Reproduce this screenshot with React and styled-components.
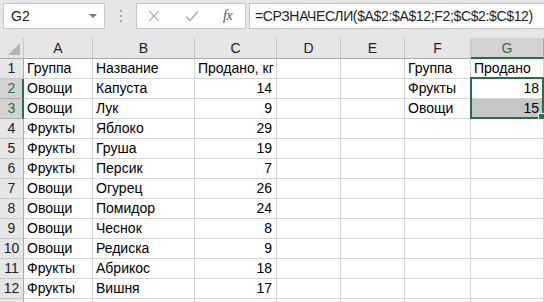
import React from "react";
import styled, { createGlobalStyle } from "styled-components";

const GlobalStyle = createGlobalStyle`
  html, body { margin: 0; padding: 0; background: #ffffff; }
  body { font-family: "Liberation Sans", Arial, sans-serif; overflow: hidden; }
  * { box-sizing: border-box; }
`;

const Page = styled.div`
  width: 544px;
  height: 302px;
  overflow: hidden;
  background: #fff;
`;

const Toolbar = styled.div`
  height: 38px;
  background: #e6e6e6;
  display: flex;
  align-items: flex-start;
  padding: 3px 0 0 3px;
`;

const Box = styled.div`
  height: 26px;
  background: #fff;
  border: 1px solid #c6c6c6;
  display: flex;
  align-items: center;
  font-size: 14px;
  color: #222;
`;

const NameBox = styled(Box)`
  width: 102px;
  padding: 0 6px 0 7px;
  justify-content: space-between;
`;

const Caret = styled.span`
  width: 0;
  height: 0;
  border-left: 4px solid transparent;
  border-right: 4px solid transparent;
  border-top: 4px solid #777;
  margin-right: 1px;
`;

const Dots = styled.div`
  width: 31px;
  height: 26px;
  display: flex;
  flex-direction: column;
  align-items: center;
  justify-content: center;
  gap: 3px;
  span {
    width: 2px;
    height: 2px;
    background: #a8a8a8;
  }
`;

const FxBox = styled(Box)`
  width: 110px;
  padding-left: 11px;
  gap: 0;
`;

const IconSlot = styled.div`
  width: 37px;
  height: 24px;
  display: flex;
  align-items: center;
  justify-content: flex-start;
`;

const Fx = styled.span`
  font-family: "Liberation Serif", "Times New Roman", serif;
  font-style: italic;
  font-size: 14px;
  color: #555;
  letter-spacing: -0.5px;
  padding-left: 1px;
`;

const FormulaBox = styled(Box)`
  flex: 1;
  margin-left: 3px;
  border-right: none;
  padding-left: 5px;
  letter-spacing: -0.35px;
`;

const Sheet = styled.div`
  position: relative;
  display: grid;
  grid-template-columns: 24px 69px 102px 82px 64px 64px 66px 73px;
  grid-auto-rows: 20px;
  grid-template-rows: 21px;
`;

const Corner = styled.div`
  background: #e6e6e6;
  border-right: 1px solid #c8c8c8;
  border-bottom: 1px solid #ababab;
  position: relative;
  &::after {
    content: "";
    position: absolute;
    right: 3px;
    bottom: 3px;
    width: 0;
    height: 0;
    border-left: 12px solid transparent;
    border-bottom: 12px solid #b4b4b4;
  }
`;

const ColHead = styled.div`
  background: ${(p) => (p.$sel ? "#d2d2d2" : "#e6e6e6")};
  color: ${(p) => (p.$sel ? "#217346" : "#222")};
  border-right: 1px solid ${(p) => (p.$sel ? "#ababab" : "#c8c8c8")};
  border-bottom: ${(p) => (p.$sel ? "2px solid #217346" : "1px solid #ababab")};
  display: flex;
  align-items: center;
  justify-content: center;
  font-size: 14px;
  padding-top: ${(p) => (p.$sel ? "1px" : "0")};
`;

const RowHead = styled.div`
  background: ${(p) => (p.$sel ? "#d2d2d2" : "#e6e6e6")};
  color: ${(p) => (p.$sel ? "#217346" : "#222")};
  border-right: ${(p) => (p.$sel ? "2px solid #217346" : "1px solid #ababab")};
  border-bottom: 1px solid ${(p) => (p.$sel ? "#ababab" : "#c8c8c8")};
  display: flex;
  align-items: flex-end;
  justify-content: center;
  padding-bottom: 2px;
  padding-left: ${(p) => (p.$sel ? "1px" : "0")};
  font-size: 14px;
`;

const Cell = styled.div`
  background: ${(p) => (p.$fill ? "#c6c6c6" : "#fff")};
  border-right: 1px solid #d4d4d4;
  border-bottom: 1px solid #d4d4d4;
  display: flex;
  align-items: flex-end;
  justify-content: ${(p) => (p.$num ? "flex-end" : "flex-start")};
  padding: 0 4px 2px 3px;
  font-size: 14px;
  color: #000;
  white-space: nowrap;
  overflow: visible;
`;

const Selection = styled.div`
  position: absolute;
  left: 470px;
  top: 39px;
  width: 74px;
  height: 42px;
  border: 2px solid #217346;
  pointer-events: none;
  &::after {
    content: "";
    position: absolute;
    right: -3px;
    bottom: -3px;
    width: 5px;
    height: 5px;
    background: #217346;
    border: 1px solid #fff;
  }
`;

const cols = ["A", "B", "C", "D", "E", "F", "G"];

const data = [
  ["Группа", "Название", "Продано, кг", "", "", "Группа", "Продано"],
  ["Овощи", "Капуста", 14, "", "", "Фрукты", 18],
  ["Овощи", "Лук", 9, "", "", "Овощи", 15],
  ["Фрукты", "Яблоко", 29],
  ["Фрукты", "Груша", 19],
  ["Фрукты", "Персик", 7],
  ["Овощи", "Огурец", 26],
  ["Овощи", "Помидор", 24],
  ["Овощи", "Чеснок", 8],
  ["Овощи", "Редиска", 9],
  ["Фрукты", "Абрикос", 18],
  ["Фрукты", "Вишня", 17],
  [],
];

const CrossIcon = () => (
  <svg width="12" height="12" viewBox="0 0 12 12">
    <path d="M1 1 L11 11 M11 1 L1 11" stroke="#b0b0b0" strokeWidth="1.3" fill="none" />
  </svg>
);

const CheckIcon = () => (
  <svg width="14" height="12" viewBox="0 0 14 12">
    <path d="M1 6.5 L5 10.5 L13 1.5" stroke="#b0b0b0" strokeWidth="1.6" fill="none" />
  </svg>
);

export default function App() {
  return (
    <Page>
      <GlobalStyle />
      <Toolbar>
        <NameBox>
          <span>G2</span>
          <Caret />
        </NameBox>
        <Dots>
          <span />
          <span />
          <span />
        </Dots>
        <FxBox>
          <IconSlot>
            <CrossIcon />
          </IconSlot>
          <IconSlot>
            <CheckIcon />
          </IconSlot>
          <Fx>fx</Fx>
        </FxBox>
        <FormulaBox>=СРЗНАЧЕСЛИ($A$2:$A$12;F2;$C$2:$C$12)</FormulaBox>
      </Toolbar>
      <Sheet>
        <Corner />
        {cols.map((c) => (
          <ColHead key={c} $sel={c === "G"}>
            {c}
          </ColHead>
        ))}
        {data.map((row, r) => (
          <React.Fragment key={r}>
            <RowHead $sel={r === 1 || r === 2}>{r < 12 ? r + 1 : ""}</RowHead>
            {cols.map((c, i) => {
              const v = row[i];
              return (
                <Cell
                  key={c}
                  $num={typeof v === "number"}
                  $fill={r === 2 && i === 6}
                >
                  {v}
                </Cell>
              );
            })}
          </React.Fragment>
        ))}
        <Selection />
      </Sheet>
    </Page>
  );
}
